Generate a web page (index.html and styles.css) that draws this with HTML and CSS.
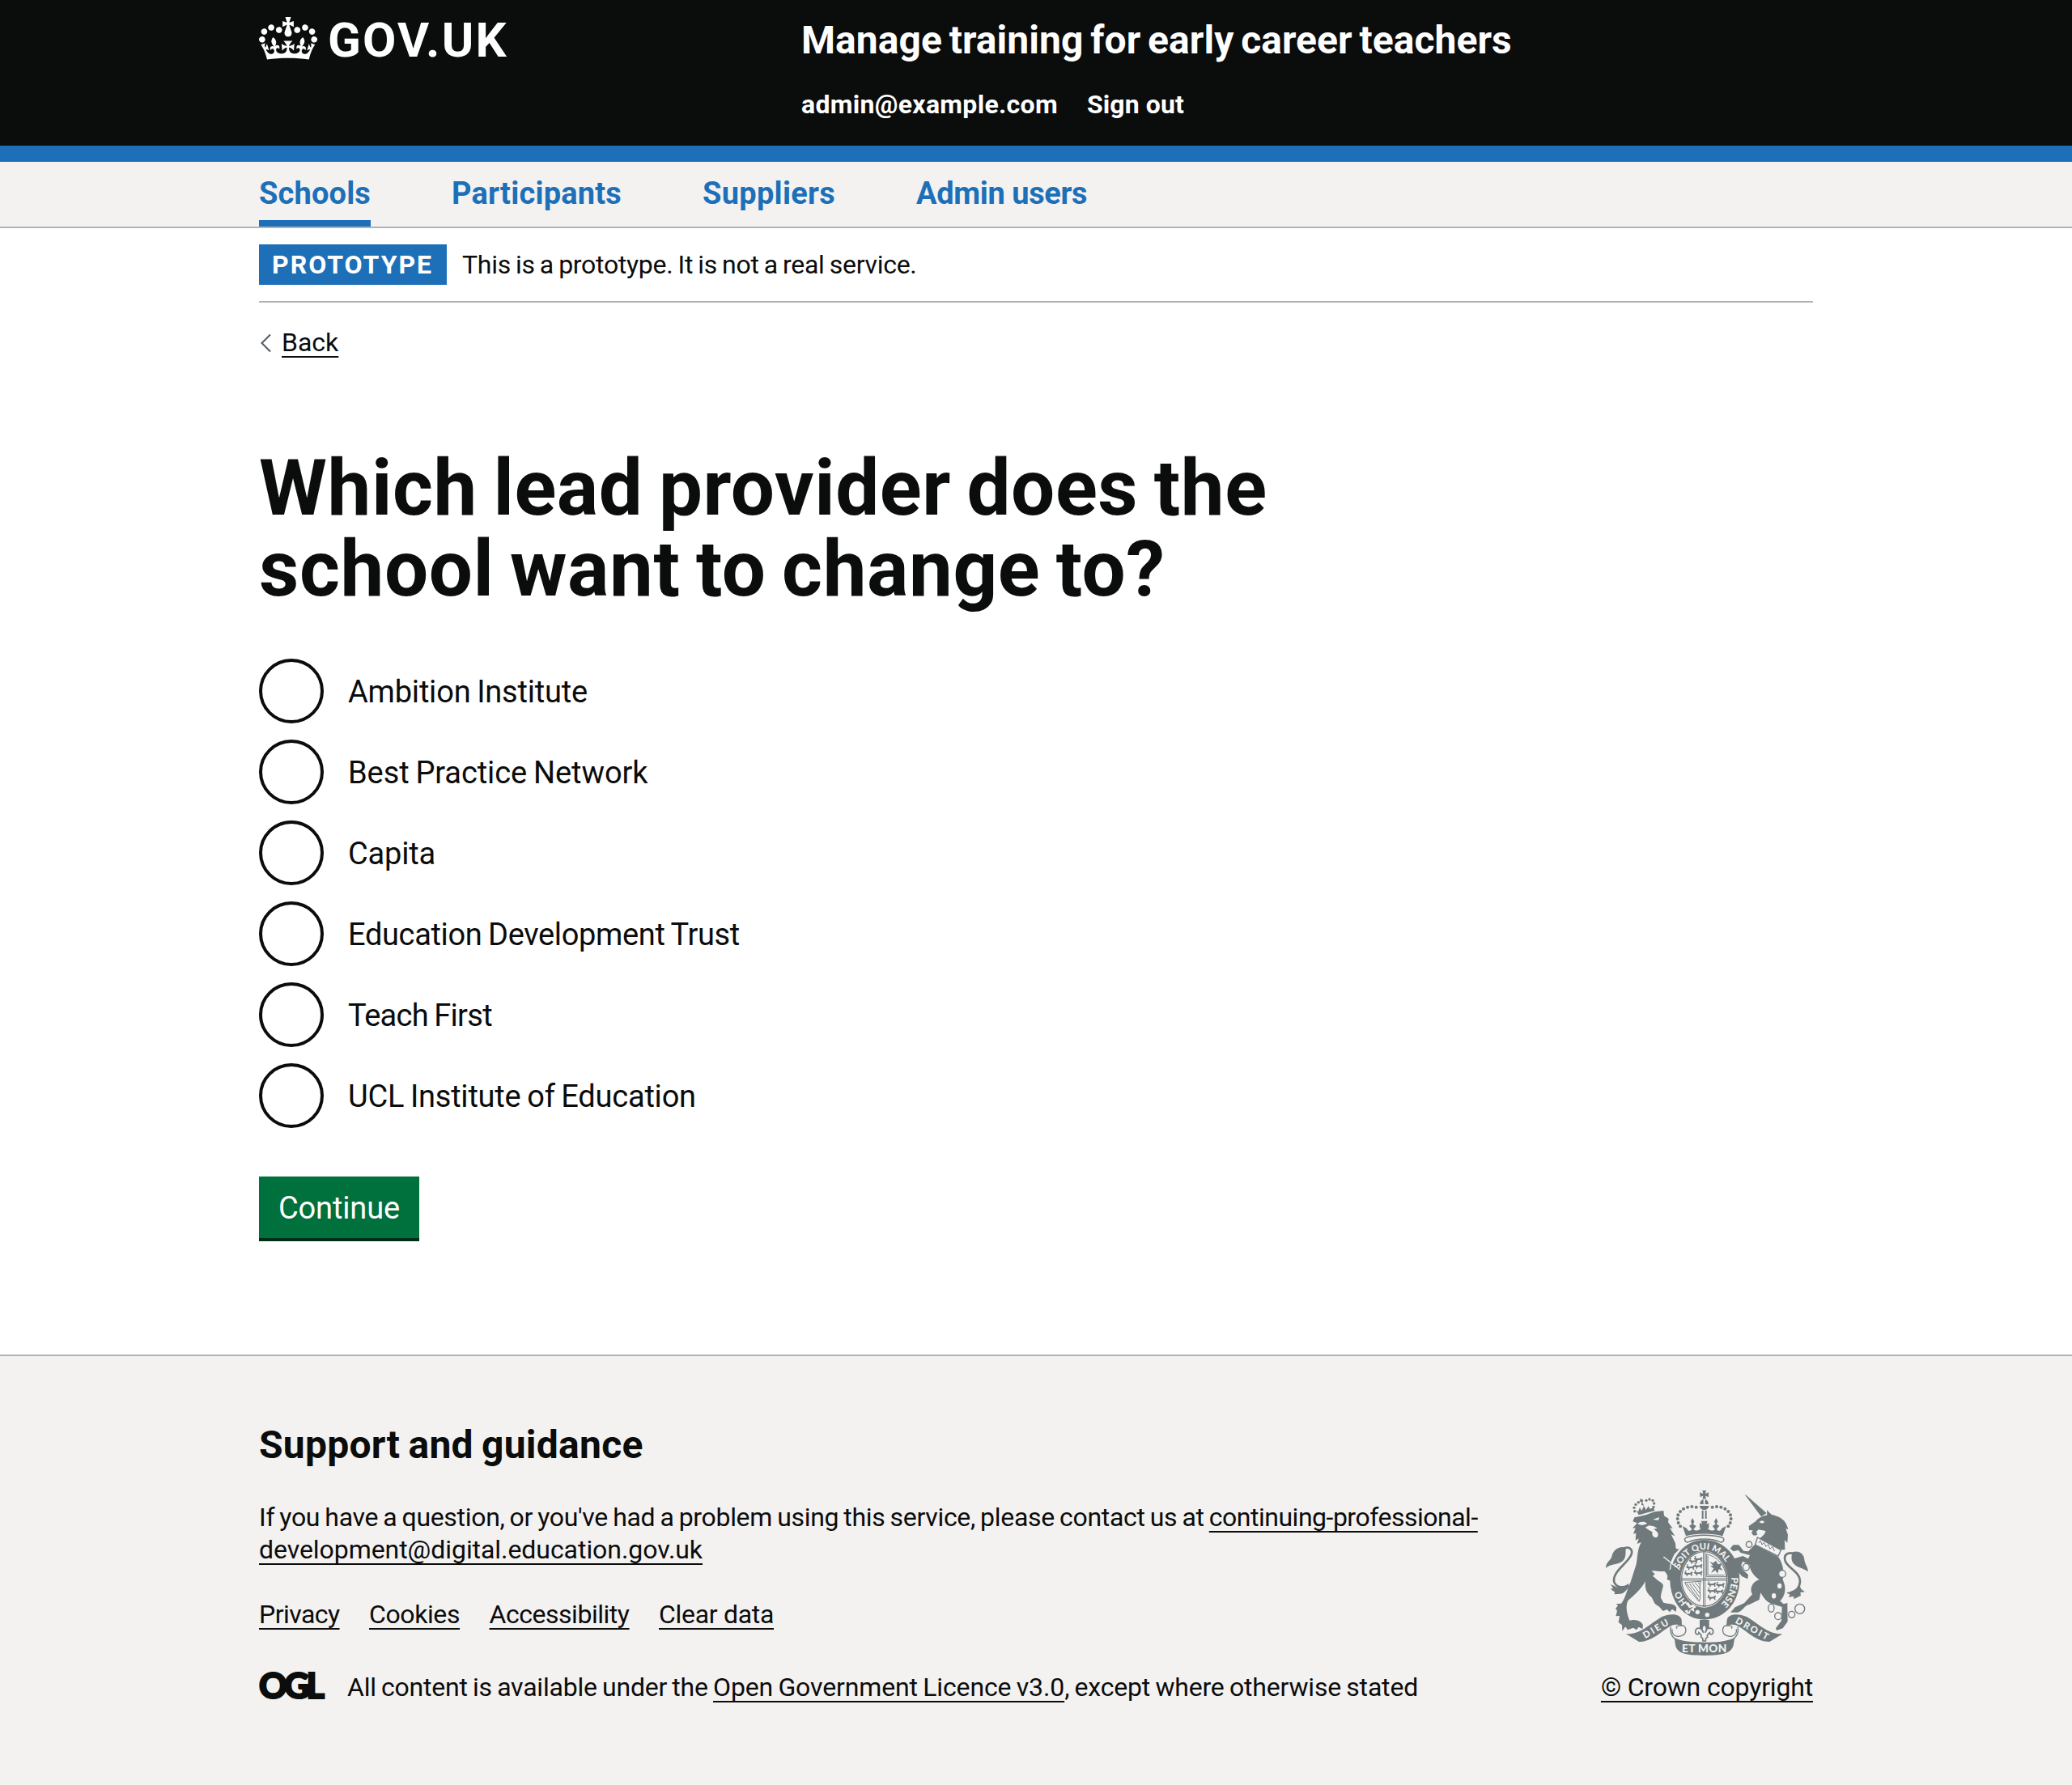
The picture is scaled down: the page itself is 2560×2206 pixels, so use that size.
FILE: index.html
```html
<!DOCTYPE html>
<html lang="en">
<head>
<meta charset="utf-8">
<title>Which lead provider does the school want to change to?</title>
<link rel="stylesheet" href="styles.css">
</head>
<body>
<header class="header">
  <div class="container header-inner">
    <a class="logo" href="#">
      <svg class="logo-crown" viewBox="0 0 132 97" aria-hidden="true"><path fill="currentColor" fill-rule="evenodd" d="M25 30.2c3.5 1.5 7.7-.2 9.1-3.7 1.5-3.6-.2-7.8-3.9-9.2-3.6-1.4-7.6.3-9.1 3.9-1.4 3.5.3 7.5 3.9 9zM9 39.5c3.6 1.5 7.8-.2 9.2-3.7 1.5-3.6-.2-7.8-3.9-9.1-3.6-1.5-7.6.2-9.1 3.8-1.4 3.5.3 7.5 3.8 9zM4.4 57.2c3.5 1.5 7.7-.2 9.1-3.8 1.5-3.6-.2-7.7-3.9-9.1-3.5-1.5-7.6.3-9.1 3.8-1.4 3.5.3 7.6 3.9 9.1zm38.3-21.4c3.5 1.5 7.7-.2 9.1-3.8 1.5-3.6-.2-7.7-3.9-9.1-3.6-1.5-7.6.3-9.1 3.8-1.3 3.6.4 7.7 3.9 9.1zm64.4-5.6c-3.6 1.5-7.8-.2-9.1-3.7-1.5-3.6.2-7.8 3.8-9.2 3.6-1.4 7.7.3 9.2 3.9 1.3 3.5-.4 7.5-3.9 9zm15.9 9.3c-3.6 1.5-7.7-.2-9.1-3.7-1.5-3.6.2-7.8 3.7-9.1 3.6-1.5 7.7.2 9.2 3.8 1.5 3.5-.3 7.5-3.8 9zm4.7 17.7c-3.6 1.5-7.8-.2-9.2-3.8-1.5-3.6.2-7.7 3.9-9.1 3.6-1.5 7.7.3 9.2 3.8 1.3 3.5-.4 7.6-3.9 9.1zM89.3 35.8c-3.6 1.5-7.8-.2-9.2-3.8-1.4-3.6.2-7.7 3.9-9.1 3.6-1.5 7.7.3 9.2 3.8 1.4 3.6-.3 7.7-3.9 9.1zM69.7 17.7l8.9 4.7V9.3l-8.9 2.8c-.2-.3-.5-.6-.9-.9L72.4 0H59.6l3.5 11.2c-.3.3-.6.5-.9.9l-8.8-2.8v13.1l8.8-4.7c.3.3.6.7.9.9l-5 15.4v.1c-.2.8-.4 1.6-.4 2.4 0 4.1 3.1 7.5 7 8.1h.2c.3 0 .7.1 1 .1.4 0 .7 0 1-.1h.2c4-.6 7.1-4.1 7.1-8.1 0-.8-.1-1.7-.4-2.4V34l-5.1-15.4c.4-.2.7-.6 1-.9zM66 92.8c16.9 0 32.8 1.1 47.1 3.2 4-16.9 8.9-26.7 14-33.5l-9.6-3.4c1 4.9 1.1 7.2 0 10.2-1.5-1.4-3-4.3-4.2-8.7L108.6 76c2.8-2 5-3.2 7.5-3.3-4.4 9.4-10 11.9-13.6 11.2-4.3-.8-6.3-4.6-5.6-7.9 1-4.7 5.7-5.9 8-.5 4.3-8.7-3-11.4-7.6-8.8 7.1-7.2 7.9-13.5 2.1-21.1-8 6.1-8.1 12.3-4.5 20.8-4.7-5.4-12.1-2.5-9.5 6.2 3.4-5.2 7.9-2 7.2 3.1-.6 4.3-6.4 7.8-13.5 7.2-10.3-.9-10.9-8-11.2-13.8 2.5-.5 7.1 1.8 11 7.3L80.2 60c-4.1 4.4-8 5.3-12.3 5.4 1.4-4.4 8-11.6 8-11.6H55.5s6.4 7.2 7.9 11.6c-4.2-.1-8-1-12.3-5.4l1.4 16.4c3.9-5.5 8.5-7.7 10.9-7.3-.3 5.8-.9 12.8-11.1 13.8-7.2.6-12.9-2.9-13.5-7.2-.7-5 3.8-8.3 7.1-3.1 2.7-8.7-4.6-11.6-9.4-6.2 3.7-8.5 3.6-14.7-4.6-20.8-5.8 7.6-5 13.9 2.2 21.1-4.7-2.6-11.9.1-7.7 8.8 2.3-5.5 7.1-4.2 8.1.5.7 3.3-1.3 7.1-5.7 7.9-3.5.7-9-1.8-13.5-11.2 2.5.1 4.7 1.3 7.5 3.3l-4.7-15.4c-1.2 4.4-2.7 7.2-4.3 8.7-1.1-3-.9-5.3 0-10.2l-9.5 3.4c5 6.9 9.9 16.7 14 33.5 14.8-2.1 30.8-3.2 47.7-3.2z"/></svg>
      <span class="logo-text">GOV.UK</span>
    </a>
    <div class="header-content">
      <a class="service-name" href="#">Manage training for early career teachers</a>
      <nav class="account-nav">
        <a class="account-email" href="#">admin@example.com</a>
        <a class="account-signout" href="#">Sign out</a>
      </nav>
    </div>
  </div>
</header>

<nav class="primary-nav">
  <div class="container primary-nav-list">
    <a class="nav-item nav-item-current nav-schools" href="#">Schools</a>
    <a class="nav-item nav-participants" href="#">Participants</a>
    <a class="nav-item nav-suppliers" href="#">Suppliers</a>
    <a class="nav-item nav-admins" href="#">Admin users</a>
  </div>
</nav>

<div class="container">
  <div class="phase-banner">
    <strong class="tag">PROTOTYPE</strong>
    <span class="phase-text">This is a prototype. It is not a real service.</span>
  </div>
  <a class="back-link" href="#">
    <svg class="back-arrow" viewBox="0 0 14 24" aria-hidden="true"><path d="M13 1.5 2.5 12 13 22.500" fill="none" stroke="#505a5f" stroke-width="2"/></svg>
    <span class="back-text">Back</span>
  </a>
  <main class="main">
    <h1 class="heading">Which lead provider does the<br>school want to change to?</h1>
    <form class="form">
      <div class="radios">
        <label class="radio"><span class="radio-ring"></span><span class="radio-label ls-ambition">Ambition Institute</span></label>
        <label class="radio"><span class="radio-ring"></span><span class="radio-label ls-best">Best Practice Network</span></label>
        <label class="radio"><span class="radio-ring"></span><span class="radio-label ls-capita">Capita</span></label>
        <label class="radio"><span class="radio-ring"></span><span class="radio-label ls-trust">Education Development Trust</span></label>
        <label class="radio"><span class="radio-ring"></span><span class="radio-label ls-teach">Teach First</span></label>
        <label class="radio"><span class="radio-ring"></span><span class="radio-label ls-ucl">UCL Institute of Education</span></label>
      </div>
      <button class="button" type="button">Continue</button>
    </form>
  </main>
</div>

<footer class="footer">
  <div class="container footer-inner">
    <div class="footer-main">
      <h2 class="footer-heading">Support and guidance</h2>
      <p class="footer-text"><span class="ls-question">If you have a question, or you've had a problem using this service, please contact us at </span><a class="link" href="#"><span class="ls-mail-first">continuing-professional-</span><br><span class="ls-mail-second">development@digital.education.gov.uk</span></a></p>
      <nav class="footer-links">
        <a class="link ls-privacy" href="#">Privacy</a>
        <a class="link ls-cookies" href="#">Cookies</a>
        <a class="link ls-accessibility" href="#">Accessibility</a>
        <a class="link ls-clear" href="#">Clear data</a>
      </nav>
      <div class="licence">
        <svg class="ogl" viewBox="0 0 82 34" role="img" aria-label="OGL"><text class="ogl-text" x="0" y="32.500">OGL</text></svg>
        <span class="licence-text"><span class="ls-available">All content is available under the </span><a class="link ls-ogl" href="#">Open Government Licence v3.0</a><span class="ls-except">, except where otherwise stated</span></span>
      </div>
    </div>
    <div class="footer-crest">
      <svg class="crest" viewBox="72 66 750 612" aria-hidden="true">
        <defs>
          <path id="garter-left" d="M374 482A96 112 0 0 1 342 405"/>
          <path id="garter-top" d="M345 358A98 112 0 0 1 531 365"/>
          <path id="garter-right" d="M537 388A104 120 0 0 1 489 494"/>
          <path id="lion-passant" d="M0 4 6 0 11 4 24 3 29-2 33 3 29 7 31 15 27 15 24 9 14 10 12 16 8 16 9 10 4 9ZM5 1 2-5 10-4"/>
        </defs>
        <g class="crest-fill">
          <!-- lion's crown -->
          <circle cx="179" cy="143" r="5"/><circle cx="177" cy="130" r="5"/><circle cx="183" cy="118" r="5"/><circle cx="193" cy="110" r="5"/><circle cx="222" cy="103" r="5"/><circle cx="234" cy="99" r="5"/><circle cx="246" cy="103" r="5"/><circle cx="251" cy="114" r="5"/><circle cx="249" cy="127" r="5"/>
          <path d="M200 96 211 101 208 112 214 122 204 120 205 109 198 107Z"/>
          <path d="M184 139 192 145 198 129 205 142 213 123 221 138 230 124 235 134 249 129 253 141 194 157Z"/>
          <!-- lion -->
          <path d="M172 181 178 166C205 162 230 155 252 145L286 141 288 160 305 171 303 184 320 207 309 205 328 235 314 229 330 262C333 275 326 286 344 283L326 304 313 334 330 352 346 377 347 407 329 424 326 412 316 419 312 401 299 396 301 384 297 374 290 366C272 367 252 363 241 364L254 376 246 384 254 389C263 401 280 405 285 417 283 433 275 448 276 464L286 482C304 488 324 482 334 500L332 516 318 506 309 517 299 507 284 513 271 498 254 486 242 462C220 445 216 424 219 402 201 435 176 455 154 475 143 500 152 528 160 548 179 543 203 548 210 565L208 580 194 572 186 583 174 575 153 583 145 571 133 587 132 565 119 555 123 531 109 532 114 512 108 504 117 493 110 487 129 485C147 463 147 440 164 405L181 352C192 326 184 294 203 258L188 264 194 244 182 251 184 224 174 227 182 205 171 206 188 187Z"/>
          <path d="M147 278C118 270 98 290 94 311 88 329 73 329 72 354 88 338 112 343 132 330 151 314 143 294 147 278Z"/>
          <path d="M154 410C143 426 124 430 110 423L90 414 99 429 89 431 106 443 103 451 127 449C144 446 148 432 160 422Z"/>
          <!-- crown -->
          <path d="M430 66H444L441 78 453 73V90L441 86 444 97H430L433 86 421 90V73L433 78ZM421 117C421 108 426 101 434 99V117ZM440 117V99C448 101 453 108 453 117ZM419 123H455C452 133 447 138 437 138 427 138 422 133 419 123Z"/>
          <circle cx="407" cy="128" r="6"/><circle cx="391" cy="126" r="6"/><circle cx="375" cy="128" r="6"/><circle cx="360" cy="134" r="6"/><circle cx="348" cy="144" r="6"/><circle cx="340" cy="157" r="6"/><circle cx="338" cy="171" r="6"/><circle cx="341" cy="186" r="6"/><circle cx="348" cy="199" r="6"/>
          <circle cx="467" cy="128" r="6"/><circle cx="483" cy="126" r="6"/><circle cx="499" cy="128" r="6"/><circle cx="514" cy="134" r="6"/><circle cx="526" cy="144" r="6"/><circle cx="534" cy="157" r="6"/><circle cx="536" cy="171" r="6"/><circle cx="533" cy="186" r="6"/><circle cx="526" cy="199" r="6"/>
          <path d="M428 140H434V171H428ZM440 140H446V171H440Z"/>
          <path d="M356 198 372 206C379 223 389 213 391 209L381 197 391 191 387 181 393 168 400 181 396 191 407 198 397 210C408 219 420 213 427 204L420 207V186L429 191 425 179H449L445 191 454 186V207L447 204C454 213 466 219 477 210L467 198 478 191 474 181 481 168 487 181 483 191 493 197 483 209C485 213 495 223 502 206L518 198 505 235C465 224 409 224 369 235Z"/>
          <!-- garter -->
          <path fill-rule="evenodd" d="M437 249C512 249 568 312 568 397 568 481 512 545 437 545 365 545 310 481 310 397 310 312 365 249 437 249ZM437 290C389 290 350 337 350 394 350 451 389 500 437 500 485 500 524 451 524 394 524 337 485 290 437 290Z"/>
        </g>
        <g class="crest-line">
          <path class="gap" d="M331 299C318 320 311 345 310 360M286 312 347 360M310 428C312 450 322 475 330 484"/>
          <path class="cushion" d="M371 240C410 229 464 229 503 240 514 245 510 257 498 258 464 242 410 242 376 258 364 257 360 245 371 240Z"/>
        </g>
        <g class="crest-paper">
          <path d="M190 188C200 180 217 180 225 188 215 196 200 196 190 188ZM218 203 232 196 250 199 263 206 250 209 264 221C269 233 263 242 254 240 246 239 242 229 245 220L233 214ZM246 174 270 165 267 176Z"/>
        </g>
        <g class="crest-line">
          <ellipse class="crest-shield" cx="437" cy="394" rx="84" ry="101"/>
          <path d="M434 294V496M440 294V496M354 393H520M354 399H520"/>
          <path class="thin" d="M445 302V386H519C514 345 485 310 445 302ZM450 308V380H512M365 407 425 403C414 425 428 452 418 478 398 454 374 432 365 407ZM372 411 415 470M382 411 418 460M392 410 421 448M403 409 423 431M414 408 422 416"/>
          <path class="tail" d="M140 280C164 272 174 289 165 307 153 335 100 365 102 400 104 419 126 431 151 420"/>
          <path class="tail" d="M769 300C744 294 730 306 737 327 746 354 792 368 792 402 791 425 777 440 757 445"/>
        </g>
        <g class="crest-fill">
          <use href="#lion-passant" x="380" y="322"/><use href="#lion-passant" x="369" y="345"/><use href="#lion-passant" x="362" y="368"/><use href="#lion-passant" x="398" y="314"/><use href="#lion-passant" x="398" y="340"/><use href="#lion-passant" x="398" y="366"/>
          <use href="#lion-passant" x="448" y="408"/><use href="#lion-passant" x="448" y="432"/><use href="#lion-passant" x="448" y="457"/><use href="#lion-passant" x="480" y="410"/><use href="#lion-passant" x="476" y="434"/>
          <path d="M457 330 470 335 480 326 488 340 502 337 496 350 506 362 491 358 486 374 478 362 462 372 472 355 459 346 470 345Z"/>
          <!-- unicorn -->
          <path d="M587 81 593 84 668 150 648 163Z"/>
          <path d="M602 198 628 180C636 168 655 160 670 157L669 139 686 155 697 158 715 165C735 176 743 190 748 211L739 207 747 230 745 260 735 250 736 286 722 286 638 246C650 239 662 230 664 216L638 211 630 219 634 231 620 233 612 224 617 214 603 213Z"/>
          <path d="M624 266 712 313C733 343 732 377 728 397 743 430 737 456 718 476L731 487 745 483 746 552 728 577 705 585 702 577 723 549 725 498 695 488C672 485 657 466 646 445L641 471 604 489C585 491 580 515 560 518L534 518 551 499 585 484 615 451C604 433 613 405 641 397 621 382 607 366 605 342L580 329 574 341 579 359 600 379 598 394 577 385 563 369 552 347 553 331 542 320 580 309 600 319 606 306 572 297 563 287 545 292 533 281 544 268 565 268 583 290 600 292Z"/>
          <path d="M765 294C792 287 807 305 808 322 810 341 820 347 822 367 802 353 790 355 773 342 755 327 760 307 765 294Z"/>
          <path d="M788 414C779 437 761 441 741 445L755 452 749 461 769 459 769 469 795 456 793 444 810 442 797 433Z"/>
        </g>
        <g class="crest-line">
          <path class="collar" d="M634 240 721 287 711 309 626 267Z"/>
          <path class="thin" d="M638 261 645 252 651 267 658 259 666 274 674 266 681 283 690 274 697 291"/>
          <circle class="link-ring" cx="603" cy="266" r="11"/><ellipse class="link-ring" cx="592" cy="350" rx="12" ry="13"/><circle class="link-ring" cx="726" cy="375" r="13"/><ellipse class="link-ring" cx="716" cy="420" rx="10" ry="12"/><ellipse class="link-ring" cx="695" cy="457" rx="10" ry="12"/><ellipse class="link-ring" cx="685" cy="502" rx="11" ry="15"/><circle class="link-ring" cx="711" cy="532" r="13"/><circle class="link-ring" cx="761" cy="526" r="12"/><circle class="link-ring" cx="791" cy="505" r="18"/>
        </g>
        <circle class="crest-paper" cx="412" cy="517" r="8"/><circle class="crest-paper" cx="448" cy="527" r="8"/>
        <path class="crest-paper" d="M368 484 378 480 385 492 396 488 408 498 398 504 400 516 386 508 384 522 374 524 364 512 380 506Z"/>
        <path class="crest-paper" d="M640 183 651 177 661 183 651 188Z"/>
        <g class="crest-fill">
          <path d="M372 488 381 502 397 497 382 510 377 520Z"/>
          <path d="M420 546H455V576H420Z"/>
          <!-- ribbon -->
          <path d="M147 598C203 600 235 560 279 535 310 520 350 522 353 546L354 568C335 560 324 563 310 570 277 588 245 627 195 627Z"/>
          <path d="M727 598C671 600 639 560 595 535 564 520 524 522 521 546L519 568C539 560 550 563 564 570 597 588 629 627 679 627Z"/>
          <path d="M326 612C350 626 395 629 437 629 479 629 524 626 550 611L545 640C538 667 512 678 437 678 362 678 336 667 330 640Z"/>
        </g>
        <g class="crest-line">
          <path class="ribbon" d="M354 566C374 570 373 598 354 604 335 612 315 603 318 580M354 568C340 565 330 569 336 578M313 572C307 595 322 618 345 626M520 566C500 570 501 598 520 604 539 612 559 603 556 580M520 568C534 565 544 569 538 578M561 572C567 595 552 618 529 626"/>
          <path class="fleur-outline" d="M437 562C449 574 446 587 440 593 447 570 471 572 470 591 469 602 456 602 457 593 450 598 446 604 449 610L443 614 442 624H432L431 614 425 610C428 604 424 598 417 593 418 602 405 602 404 591 403 572 427 570 434 593 428 587 425 574 437 562Z"/>
        </g>
        <g class="motto">
          <text x="218" y="616" font-size="34" textLength="104" transform="rotate(-31 218 616)">DIEU</text>
          <text x="354" y="667" font-size="41" textLength="166">ET MON</text>
          <text x="550" y="556" font-size="34" textLength="134" transform="rotate(29 550 556)">DROIT</text>
          <text font-size="33"><textPath href="#garter-left">HO</textPath></text>
          <text font-size="33"><textPath href="#garter-top">SOIT QUI MAL</textPath></text>
          <text font-size="35"><textPath href="#garter-right">PENSE</textPath></text>
        </g>
      </svg>
      <a class="link ls-copyright" href="#">© Crown copyright</a>
    </div>
  </div>
</footer>
</body>
</html>
```

FILE: styles.css
```css
* { box-sizing: border-box; }
body {
  margin: 0;
  background: #fff;
  color: #0b0c0c;
  font: 400 32px/40px Roboto, "Liberation Sans", sans-serif;
}
a { color: inherit; text-decoration: none; }
h1, h2, p { margin: 0; }
.container { width: 1920px; margin: 0 auto; }

/* Header */
.header { height: 200px; background: #0b0c0c; border-bottom: 20px solid #1d70b8; color: #fff; }
.header-inner { display: grid; grid-template-columns: 670px 1fr; }
.logo { display: flex; align-items: flex-start; gap: 13px; padding-top: 20px; }
.logo-crown { width: 72px; height: 53px; margin-top: 1px; }
.logo-text { font-size: 60px; line-height: 60px; font-weight: 700; letter-spacing: 2.2px; }
.header-content { display: flex; flex-direction: column; gap: 29px; padding-top: 20px; font-weight: 700; }
.service-name { font-size: 48px; line-height: 60px; letter-spacing: .05px; word-spacing: -3.2px; }
.account-nav { display: flex; gap: 36px; }
.account-email { letter-spacing: .3px; }
.account-signout { letter-spacing: .1px; }

/* Primary navigation */
.primary-nav { height: 82px; background: #f3f2f1; border-bottom: 2px solid #b1b4b6; }
.primary-nav-list { display: flex; gap: 100px; }
.nav-item { height: 80px; padding-top: 14px; color: #1d70b8; font-size: 38px; line-height: 50px; font-weight: 700; }
.nav-item-current { border-bottom: 8px solid #1d70b8; }
.nav-schools { letter-spacing: .15px; }
.nav-participants { letter-spacing: .2px; }
.nav-suppliers { letter-spacing: .28px; }
.nav-admins { letter-spacing: -.4px; }

/* Phase banner and back link */
.phase-banner { display: flex; gap: 19px; height: 92px; padding-top: 20px; border-bottom: 2px solid #b1b4b6; line-height: 50px; }
.tag { width: 232px; height: 50px; padding-left: 16px; background: #1d70b8; color: #fff; letter-spacing: 2px; }
.phase-text { letter-spacing: -.29px; word-spacing: -1.5px; }
.back-link { display: flex; width: max-content; margin-top: 29px; }
.back-arrow { width: 14px; height: 24px; margin: 9px 13px 0 1px; }
.back-text, .link { text-decoration: underline; text-decoration-thickness: 2px; text-underline-offset: 6px; text-decoration-skip-ink: none; }

/* Question */
.main { padding-top: 110px; }
.heading { font-size: 96px; line-height: 100px; font-weight: 700; letter-spacing: .6px; word-spacing: -5px; }
.form { padding-top: 61px; }
.radios { display: flex; flex-direction: column; gap: 20px; }
.radio { display: flex; align-items: center; gap: 30px; height: 80px; }
.radio-ring { width: 80px; height: 80px; border: 4px solid #0b0c0c; border-radius: 50%; }
.radio-label { padding-top: 2px; font-size: 38px; line-height: 50px; }
.ls-ambition { letter-spacing: -.2px; word-spacing: -1.5px; }
.ls-best { letter-spacing: -.08px; word-spacing: -1.5px; }
.ls-capita { letter-spacing: -.18px; }
.ls-trust { letter-spacing: -.34px; word-spacing: -1.5px; }
.ls-teach { letter-spacing: -.7px; word-spacing: -1.5px; }
.ls-ucl { letter-spacing: -.22px; word-spacing: -1.5px; }
.button { display: block; width: 198px; height: 80px; margin: 60px 0 140px; padding: 1px 0 0; border: 0; border-bottom: 4px solid #002d18; background: #00703c; color: #fff; font: 400 38px/50px Roboto, "Liberation Sans", sans-serif; letter-spacing: -.14px; }

/* Footer */
.footer { height: 532px; border-top: 2px solid #b1b4b6; background: #f3f2f1; }
.footer-inner { display: flex; justify-content: space-between; }
.footer-main { padding-top: 80px; }
.footer-heading { font-size: 48px; line-height: 60px; font-weight: 700; letter-spacing: .25px; word-spacing: -2px; }
.footer-text { margin-top: 39px; }
.footer-links { display: flex; gap: 36.5px; margin-top: 40px; }
.licence { display: flex; gap: 27px; margin-top: 50px; }
.ogl { width: 82px; height: 34px; margin-top: 1px; overflow: visible; }
.ogl-text { font-family: Lato, sans-serif; font-size: 43px; font-weight: 900; letter-spacing: -3.8px; fill: #0b0c0c; stroke: #0b0c0c; stroke-width: 2.2px; }
.ls-question { letter-spacing: -.31px; word-spacing: -1.5px; }
.ls-mail-first { letter-spacing: -.49px; }
.ls-mail-second { letter-spacing: -.06px; }
.ls-privacy { letter-spacing: -.55px; }
.ls-cookies { letter-spacing: -.4px; }
.ls-accessibility { letter-spacing: -.47px; }
.ls-clear { letter-spacing: -.31px; }
.ls-available { letter-spacing: -.21px; word-spacing: -1.5px; }
.ls-ogl { letter-spacing: -.13px; word-spacing: -1.5px; }
.ls-except { letter-spacing: -.18px; word-spacing: -1.5px; }
.ls-copyright { letter-spacing: -.17px; }

/* Royal coat of arms */
.footer-crest { display: flex; flex-direction: column; align-items: flex-end; padding-top: 166px; }
.crest { width: 250px; height: 204px; margin: 0 6px 19px 0; }
.crest-fill { fill: #707a7c; }
.crest-paper { fill: #f3f2f1; }
.crest-line { fill: none; stroke: #707a7c; stroke-width: 3; }
.crest-line .gap { stroke: #f3f2f1; stroke-width: 4; }
.crest-line .cushion { fill: #f3f2f1; stroke-width: 4; }
.crest-line .thin { stroke-width: 3; }
.crest-line .tail { stroke-width: 8; }
.crest-line .collar { fill: #f3f2f1; stroke-width: 4; }
.crest-line .ribbon { stroke-width: 4; }
.crest-line .fleur-outline { fill: #f3f2f1; stroke-width: 5; }
.crest-line .link-ring { fill: #f3f2f1; stroke-width: 4; }
.crest-line .crest-shield { fill: #f3f2f1; stroke-width: 4; }
.motto { fill: #f3f2f1; font-family: Lato, sans-serif; font-weight: 900; }
```
